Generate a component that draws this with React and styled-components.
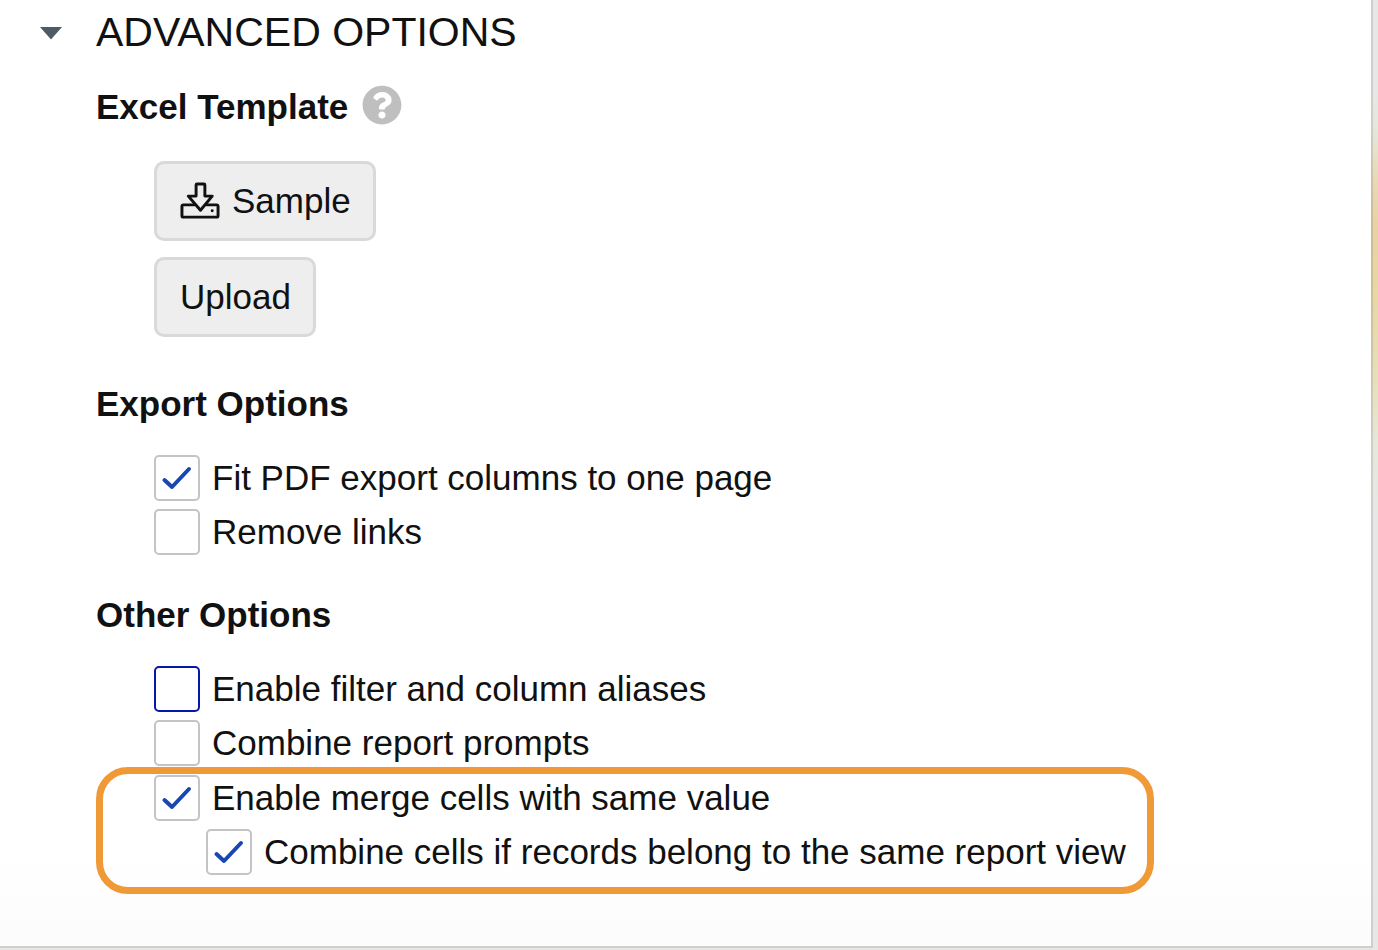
import {useState} from "react";
import styled, {createGlobalStyle} from "styled-components"
import {FaQuestionCircle} from "react-icons/fa"


const GlobalStyle = createGlobalStyle`
    *{
        box-sizing: border-box;
    }

    body{
        margin: 0;
        color: #111;
        font-family: "Liberation Sans", Arial, sans-serif;
        font-size: 35px;
    }

    button, input{
        font: inherit;
        color: inherit;
    }
`

const Page = styled.main`
    display: flex;
    min-height: 100vh;
    padding: 0 5px 2px 0;
    background: linear-gradient(
        #e7e7e6 90px, #e5e7db 130px, #e7d9b5 180px, #e7d2a2 230px,
        #e7d8a5 300px, #e6dfba 380px, #e5e8dc 450px, #e7e7e5 510px
    );
`

const Panel = styled.section`
    flex: 1;
    padding: 8px 24px 52px 40px;
    background: linear-gradient(#fff 90%, #fcfcfc) padding-box;
    border: solid rgba(0, 0, 0, 0.1);
    border-width: 0 2px 2px 0;
`

const PanelTitle = styled.h1`
    margin: 0;
    font-size: 41px;
    font-weight: normal;
    line-height: 48px;
`

const Toggle = styled.button`
    display: flex;
    align-items: center;
    gap: 34px;
    padding: 0;
    border: 0;
    background: none;
    cursor: pointer;

    svg{
        transform: ${props => props.$open ? "none" : "rotate(-90deg)"};
    }
`

const Content = styled.div`
    padding-left: 56px;
`

const SectionHead = styled.div`
    display: flex;
    align-items: flex-start;
    gap: 14px;
    margin-top: ${props => props.$space};
`

const SectionTitle = styled.h2`
    margin: 0;
    font-size: 35px;
    line-height: 44px;
`

const HelpButton = styled.button`
    display: flex;
    padding: 0;
    border: 0;
    background: none;
    color: #bfbfbf;
    font-size: 40px;
    cursor: pointer;
`

const ButtonList = styled.div`
    display: flex;
    flex-direction: column;
    align-items: flex-start;
    gap: 16px;
    margin-top: 32px;
    padding-left: 58px;
`

const Button = styled.button`
    display: flex;
    align-items: center;
    gap: 12px;
    padding: 17px 22px 17px 23px;
    border: 3px solid #d9d9d9;
    border-radius: 10px;
    background: #eee;
    line-height: 40px;
    cursor: pointer;
`

const OptionList = styled.div`
    display: flex;
    flex-direction: column;
    gap: 8px;
    margin-top: 29px;
    padding-left: 58px;
`

const Highlight = styled.div`
    display: flex;
    flex-direction: column;
    gap: 8px;
    width: fit-content;
    margin-top: 1px;
    padding: 1px 21px 12px 51px;
    border: 7px solid #f09937;
    border-radius: 32px;
`

const OptionLabel = styled.label`
    display: flex;
    align-items: center;
    gap: 12px;
    width: fit-content;
    margin-left: ${props => props.$nested ? "52px" : "0"};
    line-height: 46px;
    cursor: pointer;
`

const CheckWrap = styled.span`
    display: grid;
    flex: none;

    > *{
        grid-area: 1 / 1;
    }

    svg{
        pointer-events: none;
    }
`

const CheckInput = styled.input`
    appearance: none;
    width: 46px;
    height: 46px;
    margin: 0;
    border: ${props => props.$active ? "2px solid #0618a8" : "2px solid #c4c4c4"};
    border-radius: 5px;
    background: #fff;
    cursor: pointer;
`


function CaretIcon() {
    return (
        <svg width="22" height="16" viewBox="0 0 22 16" aria-hidden="true">
            <path d="M0 3h22L11 15.500z" fill="#4e5a65"/>
        </svg>
    )
}

function DownloadIcon() {
    return (
        <svg width="40" height="40" viewBox="0 0 41 41" fill="none" stroke="#111" strokeWidth="3"
             strokeLinejoin="round" strokeLinecap="round" aria-hidden="true">
            <path d="M17.500 3h7Q25.500 3 25.500 4v11.500h7.500L21 30 8.500 15.500h8V4Q16.500 3 17.500 3z"/>
            <path d="M14.500 24.500H3.500Q2 24.500 2 26V35.500Q2 37 3.500 37H37.500Q39 37 39 35.500V26Q39 24.500 37.500 24.500H27"/>
            <circle cx="33" cy="30.500" r="1.500" fill="#111" stroke="none"/>
        </svg>
    )
}

function Option({label, defaultChecked = false, active, nested}) {
    const [checked, setChecked] = useState(defaultChecked)

    return (
        <OptionLabel $nested={nested}>
            <CheckWrap>
                <CheckInput type="checkbox" checked={checked} $active={active}
                            onChange={e => setChecked(e.target.checked)}/>
                {checked &&
                    <svg width="46" height="46" viewBox="0 0 46 46" fill="none" aria-hidden="true">
                        <path d="M10.500 25l7.500 7 17-18" stroke="#1846b5" strokeWidth="4"
                              strokeLinecap="round" strokeLinejoin="round"/>
                    </svg>
                }
            </CheckWrap>
            <span>{label}</span>
        </OptionLabel>
    )
}


export default function App() {
    const [open, setOpen] = useState(true)

    return (
        <Page>
            <GlobalStyle/>
            <Panel>
                <PanelTitle>
                    <Toggle $open={open} aria-expanded={open} onClick={() => setOpen(!open)}>
                        <CaretIcon/>
                        ADVANCED OPTIONS
                    </Toggle>
                </PanelTitle>

                {open &&
                    <Content>
                        <SectionHead $space="29px">
                            <SectionTitle>Excel Template</SectionTitle>
                            <HelpButton aria-label="Help"><FaQuestionCircle/></HelpButton>
                        </SectionHead>
                        <ButtonList>
                            <Button><DownloadIcon/>Sample</Button>
                            <Button>Upload</Button>
                        </ButtonList>

                        <SectionHead $space="45px">
                            <SectionTitle>Export Options</SectionTitle>
                        </SectionHead>
                        <OptionList>
                            <Option label="Fit PDF export columns to one page" defaultChecked/>
                            <Option label="Remove links"/>
                        </OptionList>

                        <SectionHead $space="38px">
                            <SectionTitle>Other Options</SectionTitle>
                        </SectionHead>
                        <OptionList>
                            <Option label="Enable filter and column aliases" active/>
                            <Option label="Combine report prompts"/>
                        </OptionList>
                        <Highlight>
                            <Option label="Enable merge cells with same value" defaultChecked/>
                            <Option label="Combine cells if records belong to the same report view"
                                    defaultChecked nested/>
                        </Highlight>
                    </Content>
                }
            </Panel>
        </Page>
    );
}
